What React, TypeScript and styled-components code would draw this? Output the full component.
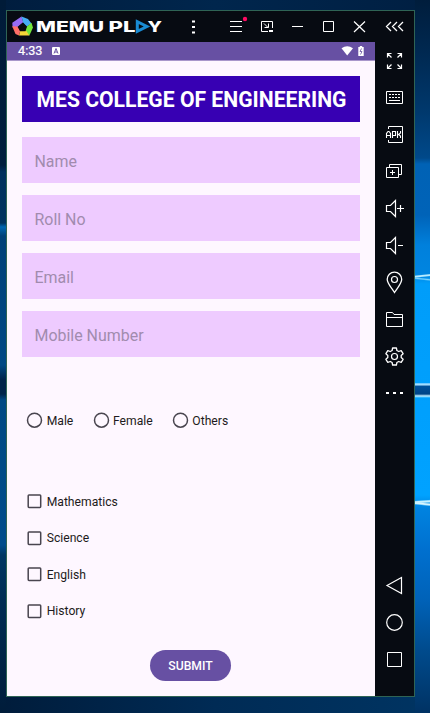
import React from 'react';
import styled, { createGlobalStyle } from 'styled-components';

const GlobalStyle = createGlobalStyle`
  * { box-sizing: border-box; }
  body { margin: 0; overflow: hidden; font-family: Roboto, "Noto Sans", sans-serif; }
`;

const Desktop = styled.div`
  width: 430px;
  height: 713px;
  padding: 10px 15px 16px 6px;
  background:
    linear-gradient(174deg, transparent 38%, #b9ecff 46%, #b9ecff 52%, transparent 60%) 415px 270px / 15px 12px no-repeat,
    linear-gradient(186deg, transparent 40%, #7fd6ff 50%, transparent 60%) 415px 273px / 15px 12px no-repeat,
    linear-gradient(#5cc0ff, #b8e6ff 2px, #00509a 3px, #004588 11px, #c4efff 13px, #5cc8ff 14px, #00a2fb) 415px 383px / 15px 15px no-repeat,
    linear-gradient(176deg, transparent 34%, #c8f2ff 44%, #c8f2ff 52%, transparent 62%) 415px 496px / 15px 12px no-repeat,
    linear-gradient(186deg, transparent 36%, #e0f8ff 46%, #c8f2ff 52%, transparent 62%) 415px 498px / 15px 12px no-repeat,
    linear-gradient(#001d3c 0, #002850 50px, #00386c 110px, #00498a 158px, #0062b5 164px, #0063b8 215px, #0080dc 245px, #0085e0 274px, #009dfa 284px, #00a2ff 495px, #0083e0 508px, #0070cf 550px, #0062b8 600px, #004b8d 650px, #003263 713px) 415px 0 / 15px 713px no-repeat,
    linear-gradient(#001b38 0, #001e3e 165px, #002f5e 172px, #00335f 223px, #0066b0 227px, #004078 236px, #004884 365px, #00234a 380px, #00234a 394px, #004884 400px, #004a86 460px, #004b8c 545px, #003764 555px, #002c54 600px, #001c3a 713px) 0 0 / 6px 713px no-repeat,
    linear-gradient(90deg, #001d3e, #00264d 50%, #001f42) 0 0 / 430px 10px no-repeat,
    linear-gradient(90deg, #001c3b, #002b55 50%, #003462) 0 697px / 430px 16px no-repeat;
`;

const EmulatorWindow = styled.div`
  display: flex;
  width: 409px;
  height: 687px;
  border: 1px solid #2f6455;
  background: #070b12;
`;

const MainColumn = styled.div`
  display: flex;
  flex-direction: column;
  width: 368px;
`;

const TitleBar = styled.header`
  display: flex;
  height: 31px;
  color: #fff;
`;

const Brand = styled.div`
  display: flex;
  align-items: center;
  width: 169px;
  padding-left: 4px;
`;

const TitleButton = styled.button<{ $gap?: number }>`
  display: block;
  flex: none;
  width: 31px;
  height: 31px;
  margin: 0 ${(p) => p.$gap ?? 0}px 0 0;
  padding: 0;
  border: 0;
  background: none;
`;

const Icon = styled.svg`
  display: block;
  flex: none;
  fill: none;
  stroke: #fff;
  stroke-width: 1;
  overflow: visible;
`;

const StatusBar = styled.div`
  display: flex;
  align-items: center;
  height: 19px;
  padding: 0 10px 0 11px;
  border-bottom: 1px solid #a997cb;
  background: #6750a3;
  color: #fff;
`;

const Clock = styled.span`
  width: 34px;
  font-size: 12.7px;
  line-height: 18px;
  -webkit-text-stroke: 0.2px #fff;
`;

const StatusIcons = styled.div`
  display: flex;
  margin-left: auto;
`;

const Form = styled.main`
  display: flex;
  flex: 1;
  flex-direction: column;
  padding: 15px 15px 0;
  background: #fef7ff;
`;

const Heading = styled.h1`
  height: 46px;
  margin: 0 0 15px;
  padding-left: 1px;
  background: #3700b3;
  color: #fff;
  font-size: 21.15px;
  font-weight: 700;
  line-height: 48px;
  text-align: center;
  white-space: nowrap;
`;

const Fields = styled.div`
  display: grid;
  gap: 12.1px;
`;

const Field = styled.input`
  width: 100%;
  height: 46px;
  padding: 2px 12.5px 0;
  border: 0;
  border-radius: 0;
  outline: 0;
  background: #eecbff;
  font: 400 15.95px Roboto, sans-serif;
  &::placeholder { color: #a18bae; opacity: 1; }
`;

const RadioRow = styled.div`
  display: flex;
  gap: 19.4px;
  margin: 54px 0 0 4.4px;
`;

const CheckList = styled.div`
  display: grid;
  grid-auto-rows: 36.4px;
  margin: 63.2px 0 0 4.4px;
`;

const Choice = styled.label`
  display: flex;
  align-items: center;
  gap: 4.3px;
  height: 18px;
  color: #1d1b20;
  font-size: 12.15px;
  line-height: 18px;
  span { padding-top: 1px; }
`;

const Submit = styled.button`
  align-self: center;
  width: 81px;
  height: 31px;
  margin: 12px 1px 0 0;
  padding: 1px 0 0;
  border: 0;
  border-radius: 16px;
  background: #6750a3;
  color: #fff;
  font: 500 12.2px Roboto, sans-serif;
`;

const ToolRail = styled.aside`
  display: flex;
  flex-direction: column;
  width: 39px;
  padding-bottom: 18px;
`;

const NavKeys = styled.div`
  margin-top: auto;
`;

const Logo = () => (
  <Icon width="154" height="25" viewBox="0 0 154 25">
    <g stroke="none">
      <path d="M1.3 8.8 10.500 2.500l1.800 6-5.200 4.200-5.500.8Z" fill="#966cf5" />
      <path d="M10.500 2.500 17 5l3.500 4.500-5 3.200-3.400-4.200Z" fill="#46adf5" />
      <path d="m20.500 8.800 1.500 4.800-3.600 8-5-2.800 2.200-6Z" fill="#72e63c" />
      <path d="M18.400 21.600H8l1.200-5.200 6 .4Z" fill="#f7d838" />
      <path d="M8 21.600 4.500 20 1.200 12.200l5.200.3L9.200 17Z" fill="#ff6f68" />
      <path d="m11.800 8.500 4.200 4-1.500 4.700H9L7 12.400Z" fill="#090c12" />
    </g>
    <g stroke="none" fill="#fff" fontFamily="Inter, sans-serif" fontWeight="800" fontSize="15">
      <text x="25" y="18" textLength="68" lengthAdjust="spacingAndGlyphs">MEMU</text>
      <text x="97.500" y="18" textLength="27" lengthAdjust="spacingAndGlyphs">PL</text>
      <text x="136.500" y="18" textLength="14.500" lengthAdjust="spacingAndGlyphs">Y</text>
    </g>
    <path d="M126.300 7.700v9.600l9.600-4.800Z" stroke="#198bd3" strokeWidth="3" />
  </Icon>
);

const titleIcons = [
  { name: 'More', gap: 12, art: <path d="M14 10.500h3M14 16h3M14 21.500h3" strokeWidth="2" /> },
  { name: 'Menu', art: <><path d="M9 10.500h12M9 15.500h12M9 20.500h12" /><circle cx="24" cy="8" r="2.200" fill="#ff0a62" stroke="none" /></> },
  { name: 'Small window', art: <><path d="M16 20.500H9.500v-10h11v6.500M12 12.500l4 4M16.500 12.500v4h-4" /><path d="M17 20h4" strokeWidth="2" /></> },
  { name: 'Minimize', art: <path d="M9 15.500h11" /> },
  { name: 'Maximize', art: <path d="M9.500 10.500h10v10h-10Z" /> },
  { name: 'Close', art: <path d="m9 10.500 11 10.500M20 10.500 9 21" strokeWidth="1.200" /> },
];

const tools = [
  { name: 'Full screen', art: <path d="M12.500 15.500v-4h4M12.500 11.500l4 4M22.500 11.500h4v4M26.500 11.500l-4 4M12.500 22.500v4h4M12.500 26.500l4-4M26.500 22.500v4h-4M26.500 26.500l-4-4" strokeWidth="1.200" /> },
  { name: 'Keyboard', art: <><path d="M11.500 12.500h16v12h-16ZM14 21.500h11" /><path d="M14 15.500h11M14 18.500h11" strokeDasharray="2 1" /></> },
  { name: 'Install APK', art: <><path d="M13.500 13v-2.500h14v16h-14V24" /><path d="M11.500 22v-4.500l1.500-2h1l1.500 2V22M11.500 19.500h4M17.500 22v-6.500h3v4h-3M22.500 15v7M25.500 15v2l-2 1.500 2 1.500v2" strokeWidth="1.100" /></> },
  { name: 'Instances', art: <path d="M14.500 14.500v-3h12v10h-3M11.500 14.500h12v10h-12ZM15 19.500h5M17.500 17v5" /> },
  { name: 'Volume up', art: <path d="M11.500 15.500h4l5-5v16l-5-5h-4ZM22 18.500h7M25.500 15v7" strokeWidth="1.200" /> },
  { name: 'Volume down', art: <path d="M11.500 15.500h4l5-5v16l-5-5h-4ZM23 18.500h5" strokeWidth="1.200" /> },
  { name: 'Location', art: <><path d="M19.500 28.500C16 23 12.200 19.500 12.200 15.300a7.200 7.200 0 0 1 14.500 0c0 4.200-3.800 7.700-7.200 13.200Z" strokeWidth="1.300" /><circle cx="19.500" cy="15.500" r="3" strokeWidth="1.200" /></> },
  { name: 'Files', art: <path d="M11.500 25.500v-14h6l1.500 2h8.500v12ZM11.500 16.500h16" /> },
  { name: 'Settings', art: <><path d="m17.600 10h3.800l.5 2.500 1.800 1 2.500-.8 1.900 3-1.900 1.800v2l1.900 1.800-1.900 3-2.500-.8-1.800 1-.5 2.500h-3.800l-.5-2.500-1.800-1-2.500.8-1.900-3 1.900-1.800v-2l-1.900-1.800 1.900-3 2.500.8 1.800-1Z" strokeWidth="1.300" strokeLinejoin="round" /><circle cx="19.500" cy="18.500" r="3" strokeWidth="1.200" /></> },
  { name: 'More tools', art: <path d="M11 18h3M18 18h3M25 18h3" strokeWidth="2" /> },
];

const navKeys = [
  { name: 'Back', art: <path d="m12 18.500 14.500-8v16Z" strokeWidth="1.200" /> },
  { name: 'Home', art: <circle cx="19.500" cy="18.500" r="7.800" strokeWidth="1.200" /> },
  { name: 'Recent', art: <path d="M12.500 11.500h14v14h-14Z" /> },
];

const RailIcon = ({ art, name }: { art: React.ReactNode; name: string }) => (
  <Icon width="39" height="37" viewBox="0 0 39 37" role="img" aria-label={name}>{art}</Icon>
);

const RadioMark = () => (
  <Icon width="16" height="16" viewBox="0 0 16 16"><circle cx="8.500" cy="8.200" r="7" stroke="#49454f" strokeWidth="1.500" /></Icon>
);

const CheckMark = () => (
  <Icon width="16" height="16" viewBox="0 0 16 16"><rect x="2.200" y="1.900" width="12.500" height="12.500" rx=".8" stroke="#49454f" strokeWidth="1.500" /></Icon>
);

export default function App() {
  return (
    <Desktop>
      <GlobalStyle />
      <EmulatorWindow>
        <MainColumn>
          <TitleBar>
            <Brand><Logo /></Brand>
            {titleIcons.map((item) => (
              <TitleButton key={item.name} $gap={item.gap} aria-label={item.name}>
                <Icon width="31" height="31" viewBox="-2 0 31 31">{item.art}</Icon>
              </TitleButton>
            ))}
          </TitleBar>
          <StatusBar>
            <Clock>4:33</Clock>
            <Icon width="8" height="8" viewBox="0 0 8 8">
              <rect width="8" height="8" rx="1" fill="#fff" stroke="none" />
              <path d="m2 6.500 2-5 2 5M3 5h2" stroke="#6750a3" />
            </Icon>
            <StatusIcons>
              <Icon width="24" height="12" viewBox="0 0 24 12">
                <path d="M.5 3.300Q6.200-.8 12 3.300L6.200 10.500Z" fill="#fff" stroke="none" />
                <path d="M17.300 2h1.500V1h2.400v1h1.500v9h-5.400Z" fill="#fff" stroke="none" />
                <path d="m20.500 3.500-1.500 3h2l-1.500 3" stroke="#6750a3" strokeWidth=".8" />
              </Icon>
            </StatusIcons>
          </StatusBar>
          <Form>
            <Heading>MES COLLEGE OF ENGINEERING</Heading>
            <Fields>
              {['Name', 'Roll No', 'Email', 'Mobile Number'].map((label) => (
                <Field key={label} placeholder={label} aria-label={label} />
              ))}
            </Fields>
            <RadioRow>
              {['Male', 'Female', 'Others'].map((label) => (
                <Choice key={label}><RadioMark /><span>{label}</span></Choice>
              ))}
            </RadioRow>
            <CheckList>
              {['Mathematics', 'Science', 'English', 'History'].map((label) => (
                <Choice key={label}><CheckMark /><span>{label}</span></Choice>
              ))}
            </CheckList>
            <Submit>SUBMIT</Submit>
          </Form>
        </MainColumn>
        <ToolRail>
          <Icon width="39" height="31" viewBox="0 0 39 31">
            <path d="m16 11-4.500 4.500L16 20M22 11l-4.500 4.500L22 20M28 11l-4.500 4.500L28 20" strokeWidth="1.300" />
          </Icon>
          {tools.map((item) => <RailIcon key={item.name} {...item} />)}
          <NavKeys>{navKeys.map((item) => <RailIcon key={item.name} {...item} />)}</NavKeys>
        </ToolRail>
      </EmulatorWindow>
    </Desktop>
  );
}
